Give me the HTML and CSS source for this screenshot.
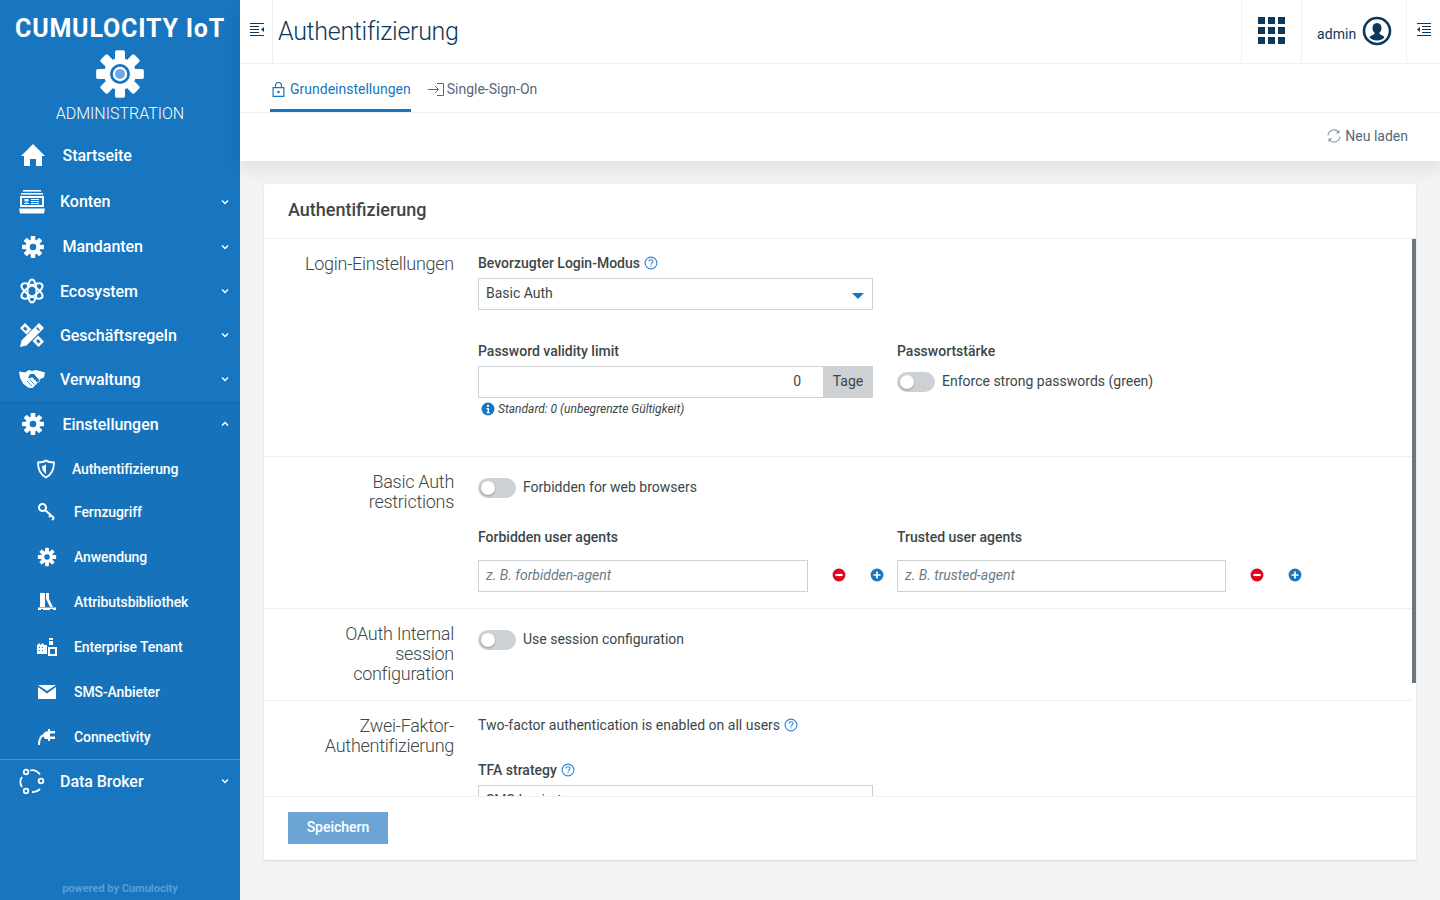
FILE: index.html
```html
<!DOCTYPE html>
<html lang="de">
<head>
<meta charset="utf-8">
<title>Authentifizierung</title>
<link rel="stylesheet" href="styles.css">
</head>
<body>
<svg class="defs" width="0" height="0">
  <defs>
    <symbol id="gear" viewBox="0 0 24 24">
      <g fill="currentColor">
        <path fill-rule="evenodd" d="M12 4.6a7.4 7.4 0 1 0 0 14.8 7.4 7.4 0 0 0 0-14.8zm0 4.1a3.3 3.3 0 1 1 0 6.6 3.3 3.3 0 0 1 0-6.6z"/>
        <rect x="9.7" y="1" width="4.6" height="4.6" rx=".8"/>
        <rect x="9.7" y="18.4" width="4.6" height="4.6" rx=".8"/>
        <rect x="1" y="9.7" width="4.6" height="4.6" rx=".8"/>
        <rect x="18.4" y="9.7" width="4.6" height="4.6" rx=".8"/>
        <rect x="9.7" y="1" width="4.6" height="4.6" rx=".8" transform="rotate(45 12 12)"/>
        <rect x="9.7" y="18.4" width="4.6" height="4.6" rx=".8" transform="rotate(45 12 12)"/>
        <rect x="1" y="9.7" width="4.6" height="4.6" rx=".8" transform="rotate(45 12 12)"/>
        <rect x="18.4" y="9.7" width="4.6" height="4.6" rx=".8" transform="rotate(45 12 12)"/>
      </g>
    </symbol>
    <symbol id="help" viewBox="0 0 14 14">
      <circle cx="7" cy="7" r="5.9" fill="none" stroke="currentColor" stroke-width="1.1"/>
      <path d="M5 5.6C5 4.4 5.9 3.7 7 3.7s2 .7 2 1.8c0 1.6-2 1.6-2 3.2" fill="none" stroke="currentColor" stroke-width="1.1"/>
      <rect x="6.5" y="9.5" width="1" height="1" fill="currentColor"/>
    </symbol>
    <symbol id="chev-down" viewBox="0 0 8 6">
      <path d="M1 1.5 4 4.5 7 1.5" fill="none" stroke="currentColor" stroke-width="1.5"/>
    </symbol>
    <symbol id="minus" viewBox="0 0 14 14">
      <circle cx="7" cy="7" r="6.4" fill="#e2001a"/>
      <rect x="3.4" y="5.9" width="7.2" height="2.2" fill="#fff"/>
    </symbol>
    <symbol id="plus" viewBox="0 0 14 14">
      <circle cx="7" cy="7" r="6.4" fill="#1776bf"/>
      <path d="M3.5 7h7M7 3.5v7" stroke="#fff" stroke-width="1.7" fill="none"/>
    </symbol>
    <symbol id="panel-toggle" viewBox="0 0 14 13">
      <path d="M0 .5h14M0 3.5h9M0 6.5h9M0 9.5h9M0 12.5h14" stroke="currentColor" stroke-width="1" fill="none"/>
      <path d="M14 4v5l-3-2.5z" fill="currentColor"/>
    </symbol>
    <symbol id="panel-toggle-r" viewBox="0 0 14 13">
      <path d="M0 .5h14M5 3.5h9M5 6.5h9M5 9.5h9M0 12.5h14" stroke="currentColor" stroke-width="1" fill="none"/>
      <path d="M0 6.5 3 4v5z" fill="currentColor"/>
    </symbol>
  </defs>
</svg>

<div class="app">
  <aside class="sidebar">
    <div class="brand">
      <div class="brand-name">CUMULOCITY IoT</div>
      <svg class="brand-gear" viewBox="0 0 48 48" width="48" height="48">
        <use href="#gear" x="-2" y="-2" width="52" height="52"/>
        <circle cx="24" cy="24" r="11" fill="#fff"/>
        <circle cx="24" cy="24" r="10" fill="#1776bf"/>
        <circle cx="24" cy="24" r="7.2" fill="#fff"/>
        <circle cx="24" cy="24" r="5" fill="#6da9e4"/>
      </svg>
      <div class="brand-app">ADMINISTRATION</div>
    </div>

    <nav class="nav">
      <a class="nav-item nav-item--start">
        <svg class="nav-icon nav-icon--wide" viewBox="0 0 26 24" width="26" height="24"><path fill="currentColor" d="M14 1 26 13H23v10h-6v-7h-6v7H5V13H2z"/></svg>
        <span>Startseite</span>
      </a>
      <a class="nav-item">
        <svg class="nav-icon" viewBox="0 0 26 24" width="26" height="24"><g fill="currentColor"><rect x="4" y="0" width="18" height="1.6"/><rect x="2" y="3" width="22" height="1.6"/><path fill-rule="evenodd" d="M1 6h24v11H1zm2 2v7h20V8z"/><rect x="5.500" y="9" width="4" height="2.400"/><path d="M5 14c0-2 5-2 5 0z"/><rect x="12" y="9" width="8" height="1"/><rect x="12" y="11" width="8" height="1"/><rect x="12" y="13" width="8" height="1"/><path d="M0 18.500h26l-1 5H1z"/></g></svg>
        <span>Konten</span><svg class="chev" width="8" height="6"><use href="#chev-down"/></svg>
      </a>
      <a class="nav-item">
        <svg class="nav-icon nav-icon--wide" width="26" height="24" viewBox="0 0 26 24"><use href="#gear" x="2" y="0" width="24" height="24"/></svg>
        <span>Mandanten</span><svg class="chev" width="8" height="6"><use href="#chev-down"/></svg>
      </a>
      <a class="nav-item nav-item--short">
        <svg class="nav-icon" viewBox="0 0 26 26" width="26" height="26"><g fill="none" stroke="currentColor" stroke-width="2"><ellipse cx="13" cy="13" rx="12" ry="5" transform="rotate(32 13 13)"/><ellipse cx="13" cy="13" rx="12" ry="5" transform="rotate(-32 13 13)"/><ellipse cx="13" cy="13" rx="11.500" ry="4.500" transform="rotate(90 13 13)"/></g></svg>
        <span>Ecosystem</span><svg class="chev" width="8" height="6"><use href="#chev-down"/></svg>
      </a>
      <a class="nav-item nav-item--short">
        <svg class="nav-icon" viewBox="0 0 26 26" width="26" height="26"><path fill="currentColor" d="M20 1l5 5L7.500 23.500 1 25l1.500-6.500z"/><path fill="#1776bf" d="M18 5l3 3-1 1-3-3z"/><path fill="#fff" d="M6 1l6.500 6.500-5 5L1 6zM19 13.500l6 6-5.500 5.500-6-6z"/><path fill="#1776bf" d="M6 4.500 8.500 7 6.500 9 4 6.500zM19 17l2.500 2.500-2 2-2.500-2.500z"/></svg>
        <span>Geschäftsregeln</span><svg class="chev" width="8" height="6"><use href="#chev-down"/></svg>
      </a>
      <a class="nav-item nav-item--verw">
        <svg class="nav-icon" viewBox="0 0 26 18" width="26" height="18"><path fill="currentColor" d="M0 1.500l6 1 4-2.500 3 1 4-1 9 2.500-1 5-3 1-5 6-4 4-4-1-5-4-3-6zM11 4 9 8c2 1 4-1 4-1l6 6 2-2-6-7z"/><path fill="none" stroke="#1776bf" stroke-width=".8" d="M8 11l5 5M10.500 9.500l5 5"/></svg>
        <span>Verwaltung</span><svg class="chev" width="8" height="6"><use href="#chev-down"/></svg>
      </a>
      <div class="group">
        <a class="nav-item nav-item--group">
          <svg class="nav-icon nav-icon--wide" width="26" height="24" viewBox="0 0 26 24"><use href="#gear" x="2" y="0" width="24" height="24"/></svg>
          <span>Einstellungen</span><svg class="chev chev--up" width="8" height="6"><use href="#chev-down"/></svg>
        </a>
        <a class="sub-item sub-item--first">
          <svg class="sub-icon sub-icon--tight" viewBox="0 0 20 20" width="20" height="20"><path fill="none" stroke="currentColor" stroke-width="1.800" d="M10 1.500c2 1.500 5 2 8 2 0 7-2 12-8 15-6-3-8-8-8-15 3 0 6-.5 8-2z"/><path fill="currentColor" d="M10 5v10c-3-2-4-5-4-8 1.500 0 3-1 4-2z"/></svg>
          <span>Authentifizierung</span>
        </a>
        <a class="sub-item sub-item--short">
          <svg class="sub-icon" viewBox="0 0 20 20" width="20" height="20"><circle cx="5.500" cy="5.500" r="3.500" fill="none" stroke="currentColor" stroke-width="2"/><path d="M8 8l9 8M14 13l-2 2M17 16l-2 2" fill="none" stroke="currentColor" stroke-width="2"/></svg>
          <span>Fernzugriff</span>
        </a>
        <a class="sub-item">
          <svg class="sub-icon" width="20" height="20" viewBox="0 0 20 20"><use href="#gear" width="20" height="20"/></svg>
          <span>Anwendung</span>
        </a>
        <a class="sub-item">
          <svg class="sub-icon" viewBox="0 0 20 20" width="20" height="20"><path fill="currentColor" d="M3 1h5v14H3zM9 1h3v6l4 8h-3l-4-8zM1 15.500h18V18h-3v-1h-3v1H6v-1H4v1H1z"/></svg>
          <span>Attributsbibliothek</span>
        </a>
        <a class="sub-item">
          <svg class="sub-icon" viewBox="0 0 20 20" width="20" height="20"><path fill="currentColor" d="M0 8l3-2v2l3-2 1 2h3v9H0zM12 1h4v2h-4zM12 4h4v4h-4z"/><path fill="none" stroke="currentColor" stroke-width="2" d="M12 11h7v7h-7z"/><path fill="#1776bf" d="M2 10h1v1H2zM5 10h1v1H5zM2 13h1v1H2zM5 13h1v1H5z"/></svg>
          <span>Enterprise Tenant</span>
        </a>
        <a class="sub-item">
          <svg class="sub-icon" viewBox="0 0 20 20" width="20" height="20"><path fill="currentColor" d="M1 3h18L10 9zM1 5l9 6.500L19 5v12H1z"/></svg>
          <span>SMS-Anbieter</span>
        </a>
        <a class="sub-item">
          <svg class="sub-icon" viewBox="0 0 20 20" width="20" height="20"><path fill="currentColor" d="M8 5l3-1V2h2v2h5v2.500h-5v3h5V12h-5v2h-2v-2H8L6 9V7z"/><path fill="none" stroke="currentColor" stroke-width="2" d="M7 8C3 9 2 12 2 18"/></svg>
          <span>Connectivity</span>
        </a>
      </div>
      <a class="nav-item nav-item--broker">
        <svg class="nav-icon" viewBox="0 0 26 26" width="26" height="26"><g fill="none" stroke="currentColor" stroke-width="1.800"><path d="M3 9c-2 3-2 7 0 10M11 2.500c3-.8 7 .3 10 4M21 21c-2 2-5 3.500-8 3"/><circle cx="7" cy="4" r="2.300"/><circle cx="7" cy="23" r="2.300"/><circle cx="22" cy="13" r="2.300"/></g></svg>
        <span>Data Broker</span><svg class="chev" width="8" height="6"><use href="#chev-down"/></svg>
      </a>
    </nav>
    <div class="powered">powered by Cumulocity</div>
  </aside>

  <div class="main">
    <header class="header">
      <div class="topbar">
        <div class="topbar-toggle"><svg width="14" height="13" class="navy"><use href="#panel-toggle"/></svg></div>
        <h1 class="page-title">Authentifizierung</h1>
        <div class="topbar-cell topbar-cell--apps">
          <svg width="27" height="27" viewBox="0 0 27 27"><g fill="#0b385b"><rect x="0" y="0" width="7" height="7"/><rect x="10" y="0" width="7" height="7"/><rect x="20" y="0" width="7" height="7"/><rect x="0" y="10" width="7" height="7"/><rect x="10" y="10" width="7" height="7"/><rect x="20" y="10" width="7" height="7"/><rect x="0" y="20" width="7" height="7"/><rect x="10" y="20" width="7" height="7"/><rect x="20" y="20" width="7" height="7"/></g></svg>
        </div>
        <div class="topbar-cell topbar-cell--user">
          <span class="user-name">admin</span>
          <svg width="30" height="30" viewBox="0 0 30 30"><circle cx="15" cy="15" r="13" fill="none" stroke="#0b385b" stroke-width="2.600"/><path fill="#0b385b" d="M15 7c3 0 4.500 2.200 4.500 5 0 2-.8 3.600-2 4.500v1.500c1.500 1 4.500 1.500 5 3.500-2 2-4.500 3-7.500 3s-5.500-1-7.500-3c.5-2 3.500-2.500 5-3.500v-1.500c-1.200-.9-2-2.500-2-4.500 0-2.800 1.500-5 4.500-5z"/></svg>
        </div>
        <div class="topbar-cell topbar-cell--right"><svg width="14" height="13" class="navy"><use href="#panel-toggle-r"/></svg></div>
      </div>
      <div class="tabs">
        <a class="tab tab--active">
          <svg width="13" height="15" viewBox="0 0 13 15"><path fill="none" stroke="currentColor" stroke-width="1.200" d="M1.100 5.600h10.800v8.800H1.100zM3.500 5.600V3.500a3 3 0 0 1 6 0v2.100"/><circle cx="6.500" cy="10" r="1.300" fill="currentColor"/></svg>
          <span>Grundeinstellungen</span>
        </a>
        <a class="tab">
          <svg width="16" height="13" viewBox="0 0 16 13"><path fill="none" stroke="currentColor" stroke-width="1" d="M0 6.500h10M7 3l3.500 3.500L7 10M9 .5h6.500v12H9"/></svg>
          <span>Single-Sign-On</span>
        </a>
      </div>
      <div class="actions">
        <a class="reload">
          <svg width="14" height="14" viewBox="0 0 14 14"><path fill="none" stroke="#8a98a5" stroke-width="1.100" d="M1 6.500A6 6 0 0 1 11.500 3M13 7.500A6 6 0 0 1 2.500 11"/><path fill="#8a98a5" d="M12.500.8v3.700H8.800zM1.500 13.200V9.500h3.700z"/></svg>
          <span>Neu laden</span>
        </a>
      </div>
    </header>

    <section class="card">
      <h2 class="card-title">Authentifizierung</h2>
      <div class="card-scroll">
        <div class="scroll-thumb"></div>

        <div class="row row--login">
          <div class="row-label row-label--nudge">Login-Einstellungen</div>
          <div class="row-body">
            <label class="field-label">Bevorzugter Login-Modus <svg class="help" width="14" height="14"><use href="#help"/></svg></label>
            <div class="select">
              <span>Basic Auth</span>
              <i class="caret"></i>
            </div>
            <div class="two-col two-col--gap">
              <div class="col">
                <label class="field-label">Password validity limit</label>
                <div class="input-group">
                  <div class="input input--number">0</div>
                  <div class="addon">Tage</div>
                </div>
                <p class="hint">
                  <svg width="14" height="14" viewBox="0 0 14 14"><circle cx="7" cy="7" r="6.500" fill="#1776bf"/><rect x="6" y="2.800" width="2" height="2" fill="#fff"/><path d="M5.500 6h2.500v4.200h1v1H5.500v-1h1V7h-1z" fill="#fff"/></svg>
                  <span>Standard: 0 (unbegrenzte Gültigkeit)</span>
                </p>
              </div>
              <div class="col">
                <label class="field-label">Passwortstärke</label>
                <div class="switch-line switch-line--inset">
                  <span class="switch"><i></i></span>
                  <span class="switch-text">Enforce strong passwords (green)</span>
                </div>
              </div>
            </div>
          </div>
        </div>

        <div class="row row--basic">
          <div class="row-label">Basic Auth restrictions</div>
          <div class="row-body row-body--switch">
            <div class="switch-line">
              <span class="switch"><i></i></span>
              <span class="switch-text">Forbidden for web browsers</span>
            </div>
            <div class="two-col two-col--agents">
              <div class="col">
                <label class="field-label">Forbidden user agents</label>
                <div class="agent-line">
                  <div class="input input--placeholder input--wide">z. B. forbidden-agent</div>
                  <svg class="agent-btn" width="14" height="14"><use href="#minus"/></svg>
                  <svg class="agent-btn" width="14" height="14"><use href="#plus"/></svg>
                </div>
              </div>
              <div class="col">
                <label class="field-label">Trusted user agents</label>
                <div class="agent-line">
                  <div class="input input--placeholder">z. B. trusted-agent</div>
                  <svg class="agent-btn" width="14" height="14"><use href="#minus"/></svg>
                  <svg class="agent-btn" width="14" height="14"><use href="#plus"/></svg>
                </div>
              </div>
            </div>
          </div>
        </div>

        <div class="row row--oauth">
          <div class="row-label">OAuth Internal session configuration</div>
          <div class="row-body row-body--switch">
            <div class="switch-line">
              <span class="switch"><i></i></span>
              <span class="switch-text">Use session configuration</span>
            </div>
          </div>
        </div>

        <div class="row row--tfa">
          <div class="row-label row-label--nudge">Zwei-Faktor-Authentifizierung</div>
          <div class="row-body">
            <p class="tfa-note">Two-factor authentication is enabled on all users <svg class="help" width="14" height="14"><use href="#help"/></svg></p>
            <label class="field-label field-label--tfa">TFA strategy <svg class="help" width="14" height="14"><use href="#help"/></svg></label>
            <div class="select"><span>SMS-basiert</span></div>
          </div>
        </div>
      </div>
      <div class="card-footer">
        <button class="btn-save" type="button">Speichern</button>
      </div>
    </section>
  </div>
</div>
</body>
</html>
```

FILE: styles.css
```css
* { box-sizing: border-box; }
html, body { height: 100%; }
body {
  margin: 0;
  font-family: Roboto, "Liberation Sans", sans-serif;
  font-size: 14px;
  color: #3b4748;
  background: #f2f3f4;
  overflow: hidden;
}
.defs { display: block; height: 0; }
svg { display: block; flex: none; }
.app { display: flex; height: 900px; }

/* Sidebar */
.sidebar {
  width: 240px;
  flex: none;
  display: flex;
  flex-direction: column;
  background: #1776bf;
  color: #fff;
}
.brand {
  height: 133px;
  display: flex;
  flex-direction: column;
  align-items: center;
  padding-top: 14px;
}
.brand-name { font-size: 25px; font-weight: 700; line-height: 30px; white-space: nowrap; letter-spacing: .8px; }
.brand-gear { margin-top: 6px; }
.brand-app { font-size: 16px; font-weight: 300; line-height: 20px; margin-top: 6px; }
.nav { display: flex; flex-direction: column; }
.nav-item {
  display: flex;
  align-items: center;
  height: 45px;
  padding: 0 11px 0 19px;
  font-size: 16px;
  font-weight: 500;
  letter-spacing: -.05px;
  color: #fff;
}
.nav-item--start { height: 46px; padding-bottom: 2px; }
.nav-item--short { height: 44px; }
.nav-item--verw { height: 45px; padding-bottom: 1px; }
.nav-item--group { height: 44px; padding-bottom: 2px; }
.nav-item--broker { height: 44px; padding-bottom: 2px; }
.nav-icon { margin-right: 15px; width: 26px; }
.nav-icon--wide { margin-right: 17.500px; }
.chev { margin-left: auto; }
.chev--up { transform: rotate(180deg); }
.group {
  background: #1673bb;
  border-top: 1px solid #1469ab;
  border-bottom: 1px solid #4a91cb;
}
.sub-item {
  display: flex;
  align-items: center;
  height: 45px;
  padding-left: 37px;
  font-size: 14px;
  font-weight: 500;
  letter-spacing: -.1px;
  color: #fff;
}
.sub-item--first { height: 44px; }
.sub-item--short { height: 43px; padding-bottom: 1px; }
.sub-icon { margin-right: 17px; }
.sub-icon--tight { margin-left: -1px; margin-right: 16px; }
.powered {
  margin-top: auto;
  padding-bottom: 4px;
  text-align: center;
  font-size: 11px;
  line-height: 14px;
  font-weight: 700;
  color: rgba(255, 255, 255, .3);
}

/* Main */
.main { flex: 1; min-width: 0; display: flex; flex-direction: column; }
.header {
  background: #fff;
  box-shadow: 0 8px 16px rgba(0, 0, 0, .08);
  position: relative;
}
.topbar {
  display: flex;
  height: 64px;
  border-bottom: 1px solid #eef0f1;
  color: #0b385b;
}
.navy { color: #0b385b; }
.topbar-toggle {
  width: 33px;
  display: flex;
  align-items: center;
  padding: 0 0 4px 10px;
  border-right: 1px solid #eef0f1;
}
.page-title {
  margin: 0 auto 0 5px;
  font-size: 25px;
  font-weight: 300;
  letter-spacing: -.3px;
  line-height: 63px;
  color: #0b385b;
}
.topbar-cell {
  display: flex;
  align-items: center;
  border-left: 1px solid #eef0f1;
}
.topbar-cell--apps { width: 60px; justify-content: center; padding-right: 1px; padding-bottom: 2px; }
.topbar-cell--user { width: 105px; padding-left: 15px; padding-bottom: 2px; gap: 6px; }
.topbar-cell--right { width: 34px; justify-content: center; padding-bottom: 4px; }
.user-name { font-size: 14px; line-height: 14px; padding-top: 6px; letter-spacing: .1px; }
.tabs {
  display: flex;
  height: 49px;
  padding-left: 30px;
  gap: 17px;
  border-bottom: 1px solid #eef0f1;
}
.tab {
  display: flex;
  align-items: center;
  gap: 3px;
  height: 48px;
  padding-top: 5px;
  border-bottom: 3px solid transparent;
  color: #56677a;
}
.tab--active { color: #1776bf; border-bottom-color: #1776bf; padding-left: 2px; gap: 5px; }
.actions {
  display: flex;
  justify-content: flex-end;
  align-items: center;
  height: 48px;
  padding: 0 32px 2px 0;
}
.reload { display: flex; align-items: center; gap: 4px; color: #56677a; }

/* Card */
.card {
  margin: 23px 24px 0;
  height: 676px;
  background: #fff;
  display: flex;
  flex-direction: column;
  border-radius: 2px;
  box-shadow: 0 1px 2px rgba(0, 0, 0, .12);
}
.card-title {
  margin: 0;
  height: 55px;
  flex: none;
  padding: 0 24px 3px;
  display: flex;
  align-items: center;
  font-size: 18px;
  font-weight: 500;
  color: #3b4748;
  border-bottom: 1px solid #eef0f1;
}
.card-scroll {
  position: relative;
  flex: 1;
  min-height: 0;
  overflow: hidden;
}
.scroll-thumb {
  position: absolute;
  top: 0;
  right: 0;
  width: 4px;
  height: 444px;
  background: #6b7680;
}
.row {
  display: flex;
  gap: 24px;
  padding-top: 15px;
  border-bottom: 1px solid #eef0f1;
  margin-right: 4px;
}
.row--login { height: 218px; padding-top: 14px; }
.row--basic { height: 152px; }
.row--oauth { height: 92px; }
.row--tfa { border-bottom: 0; height: 120px; padding-top: 14px; }
.row-label {
  width: 190px;
  flex: none;
  padding-left: 30px;
  text-align: right;
  font-size: 18px;
  font-weight: 300;
  letter-spacing: -.27px;
  line-height: 20px;
  color: #3b4748;
}
.row-label--nudge { margin-top: 1px; }
.row-body { flex: 1; min-width: 0; }
.row-body--switch { padding-top: 6px; }
.field-label {
  display: flex;
  align-items: center;
  gap: 4px;
  height: 20px;
  font-weight: 500;
  color: #3b4748;
}
.help { color: #2f84d8; }
.select {
  width: 395px;
  height: 32px;
  margin-top: 5px;
  padding: 0 7px 2px;
  display: flex;
  align-items: center;
  justify-content: space-between;
  border: 1px solid #cdd1d4;
}
.caret {
  width: 0;
  height: 0;
  margin-top: 5px;
  margin-right: 1px;
  border-left: 6.500px solid transparent;
  border-right: 6.500px solid transparent;
  border-top: 6px solid #1776bf;
}
.two-col { display: grid; grid-template-columns: 395px 1fr; gap: 24px; }
.two-col--gap { margin-top: 31px; }
.two-col--agents { margin-top: 29px; }
.col { min-width: 0; }
.input-group { display: flex; width: 395px; height: 32px; margin-top: 5px; }
.input {
  height: 32px;
  border: 1px solid #cdd1d4;
  display: flex;
  align-items: center;
  padding: 0 7px 2px;
}
.input--number { flex: 1; justify-content: flex-end; padding-right: 22px; border-right: 0; }
.addon {
  width: 50px;
  background: #cdd1d4;
  display: flex;
  align-items: center;
  justify-content: center;
  padding-bottom: 2px;
}
.hint {
  margin: 3px 0 0 2.500px;
  display: flex;
  align-items: center;
  gap: 3.500px;
  font-size: 12px;
  font-style: italic;
  line-height: 16px;
}
.switch-line { display: flex; align-items: center; gap: 7px; height: 20px; }
.switch-line--inset { margin-top: 11px; }
.switch-text { padding-bottom: 2px; }
.switch {
  width: 38px;
  height: 20px;
  border-radius: 10px;
  background: #cdd1d4;
  display: flex;
  align-items: center;
  padding-left: 3px;
}
.switch i {
  width: 14px;
  height: 14px;
  border-radius: 50%;
  background: #fff;
  box-shadow: 0 1px 2px rgba(0, 0, 0, .3);
}
.agent-line { display: flex; align-items: center; margin-top: 13px; }
.agent-line .input { width: 329px; flex: none; }
.agent-line .input--wide { width: 330px; }
.input--placeholder { font-style: italic; color: #6d7b88; }
.agent-btn { margin-left: 24px; margin-bottom: 2px; }
.tfa-note {
  margin: 0;
  height: 20px;
  display: flex;
  align-items: center;
  gap: 4px;
}
.field-label--tfa { margin-top: 25px; }
.card-footer {
  height: 64px;
  flex: none;
  border-top: 1px solid #eef0f1;
  padding: 15px 24px 0;
}
.btn-save {
  width: 100px;
  height: 32px;
  border: 0;
  padding: 0 0 2px;
  background: #6aa5d6;
  color: #fff;
  font: 500 14px Roboto, "Liberation Sans", sans-serif;
}
```
